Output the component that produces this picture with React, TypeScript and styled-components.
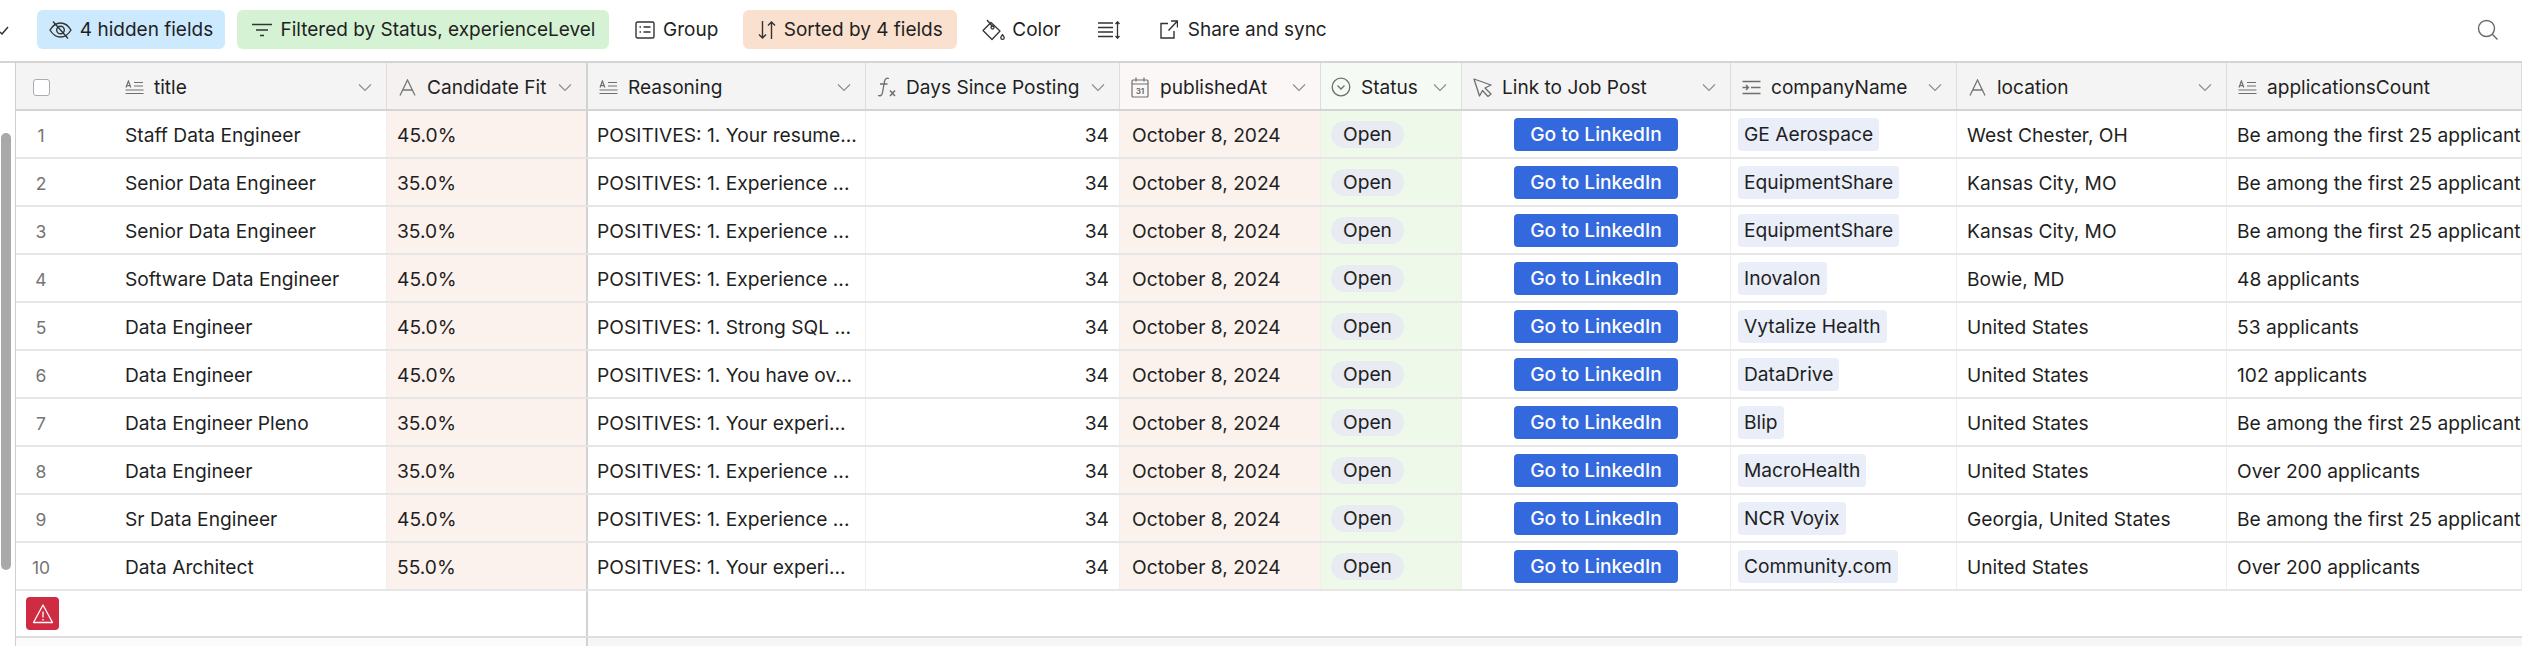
import React from 'react';
import styled, { createGlobalStyle } from 'styled-components';

const COLUMNS = '371px 201px 278px 254px 201px 141px 269px 226px 270px 295px';

type IconKind = 'longText' | 'text' | 'formula' | 'date' | 'select' | 'cursor' | 'indent';

interface Job {
  title: string;
  fit: string;
  reason: string;
  company: string;
  location: string;
  applicants: string;
}

const FIRST_25 = 'Be among the first 25 applicants';

const JOBS: Job[] = [
  { title: 'Staff Data Engineer', fit: '45.0%', reason: 'POSITIVES: 1. Your resume...', company: 'GE Aerospace', location: 'West Chester, OH', applicants: FIRST_25 },
  { title: 'Senior Data Engineer', fit: '35.0%', reason: 'POSITIVES: 1. Experience ...', company: 'EquipmentShare', location: 'Kansas City, MO', applicants: FIRST_25 },
  { title: 'Senior Data Engineer', fit: '35.0%', reason: 'POSITIVES: 1. Experience ...', company: 'EquipmentShare', location: 'Kansas City, MO', applicants: FIRST_25 },
  { title: 'Software Data Engineer', fit: '45.0%', reason: 'POSITIVES: 1. Experience ...', company: 'Inovalon', location: 'Bowie, MD', applicants: '48 applicants' },
  { title: 'Data Engineer', fit: '45.0%', reason: 'POSITIVES: 1. Strong SQL ...', company: 'Vytalize Health', location: 'United States', applicants: '53 applicants' },
  { title: 'Data Engineer', fit: '45.0%', reason: 'POSITIVES: 1. You have ov...', company: 'DataDrive', location: 'United States', applicants: '102 applicants' },
  { title: 'Data Engineer Pleno', fit: '35.0%', reason: 'POSITIVES: 1. Your experi...', company: 'Blip', location: 'United States', applicants: FIRST_25 },
  { title: 'Data Engineer', fit: '35.0%', reason: 'POSITIVES: 1. Experience ...', company: 'MacroHealth', location: 'United States', applicants: 'Over 200 applicants' },
  { title: 'Sr Data Engineer', fit: '45.0%', reason: 'POSITIVES: 1. Experience ...', company: 'NCR Voyix', location: 'Georgia, United States', applicants: FIRST_25 },
  { title: 'Data Architect', fit: '55.0%', reason: 'POSITIVES: 1. Your experi...', company: 'Community.com', location: 'United States', applicants: 'Over 200 applicants' },
];

function FieldIcon({ kind }: { kind: IconKind }) {
  switch (kind) {
    case 'longText':
      return (
        <svg width="19" height="15" viewBox="0 0 19 15" fill="none" stroke="#6e6e6e" strokeWidth="1.2">
          <path d="M1 7.500 3.400 1l2.400 6.500M1.800 5.600h3.200M9 2.500h9M9 6h9M.5 10h18M.5 13.500h18" />
        </svg>
      );
    case 'text':
      return (
        <svg width="17" height="17" viewBox="0 0 17 17" fill="none" stroke="#757575" strokeWidth="1.3">
          <path d="M1 16.500 8.500 1 16 16.500M4 11h9" />
        </svg>
      );
    case 'formula':
      return (
        <svg width="19" height="20" viewBox="0 0 19 20" fill="none" stroke="#6e6e6e" strokeWidth="1.3">
          <path d="M12 1.500c-2.500-1-4 .5-4.500 3L5.500 15.500c-.5 2.800-2 3.800-4.500 3M3 7h7.500" />
          <path d="m13 13.500 5 5.500M18 13.500 13 19" strokeWidth="1.500" />
        </svg>
      );
    case 'date':
      return (
        <svg width="18" height="21" viewBox="0 0 18 21" fill="none" stroke="#6e6e6e" strokeWidth="1.200">
          <rect x="1" y="3" width="16" height="17" rx="1" />
          <path d="M1 7h16M5 .5v4M13 .5v4" />
          <text x="9" y="17" textAnchor="middle" fontSize="8" fontWeight="700" fill="#6e6e6e" stroke="none" fontFamily="Inter, sans-serif">31</text>
        </svg>
      );
    case 'select':
      return (
        <svg width="20" height="20" viewBox="0 0 20 20" fill="none" stroke="#6e6e6e" strokeWidth="1.300">
          <circle cx="10" cy="10" r="8.800" />
          <path d="m6.500 8.500 3.500 3.500 3.500-3.500" />
        </svg>
      );
    case 'cursor':
      return (
        <svg width="19" height="19" viewBox="0 0 19 19" fill="none" stroke="#6e6e6e" strokeWidth="1.300" strokeLinejoin="round">
          <path d="M1 1 18 7l-6 3 6 6-3 2.500-5.500-6L6.500 18 1 1Z" />
        </svg>
      );
    case 'indent':
      return (
        <svg width="19" height="15" viewBox="0 0 19 15" fill="none" stroke="#6e6e6e" strokeWidth="1.400">
          <path d="M.5 1.500h18M9 7.500h9.500M.5 13.500h18M.5 7.500H6M4 5l2.500 2.500L4 10" />
        </svg>
      );
  }
}

function HeadLabel({ kind, text }: { kind: IconKind; text: string }) {
  return (
    <LabelRow>
      <IconSlot>
        <FieldIcon kind={kind} />
      </IconSlot>
      {text}
    </LabelRow>
  );
}

function Chevron() {
  return (
    <ChevronIcon width="14" height="9" viewBox="0 0 14 9" fill="none" stroke="#8c8c8c" strokeWidth="1.100">
      <path d="m1 1.500 6 6 6-6" />
    </ChevronIcon>
  );
}

export default function App() {
  return (
    <>
      <GlobalStyle />
      <Page>
        <Toolbar>
          <CutOffCaret width="10" height="10" viewBox="0 0 10 10" fill="none" stroke="#333" strokeWidth="1.500">
            <path d="m0 7 2 2 6-7" />
          </CutOffCaret>
          <Pill $bg="#cce9fe" $width={188}>
            <svg width="23" height="20" viewBox="0 0 23 20" fill="none" stroke="#333" strokeWidth="1.400">
              <path d="M1 10c3-5 6.500-7 10.500-7S19 5 22 10c-3 5-6.500 7-10.500 7S4 15 1 10Z" />
              <circle cx="11.500" cy="10" r="3.800" />
              <path d="M4 1.500l15 17" />
            </svg>
            4 hidden fields
          </Pill>
          <Pill $bg="#d5f3d4" $width={372}>
            <svg width="22" height="14" viewBox="0 0 22 14" fill="none" stroke="#333" strokeWidth="1.600">
              <path d="M1 1.500h20M5 7h12M9 12.500h4" />
            </svg>
            Filtered by Status, experienceLevel
          </Pill>
          <PlainAction $gap={8} $left={26}>
            <svg width="20" height="18" viewBox="0 0 20 18" fill="none" stroke="#333" strokeWidth="1.400">
              <rect x="1" y="1" width="18" height="16" rx="1.500" />
              <path d="M4.500 6H6M4.500 11H6M8.500 6h7M8.500 11h7" />
            </svg>
            Group
          </PlainAction>
          <Pill $bg="#fae0ce" $width={214} $left={13}>
            <svg width="18" height="20" viewBox="0 0 18 20" fill="none" stroke="#333" strokeWidth="1.400">
              <path d="M4.500 1v17M1 14.500 4.500 18 8 14.500M13.500 19V2M10 5.500 13.500 2 17 5.500" />
            </svg>
            Sorted by 4 fields
          </Pill>
          <PlainAction $gap={7} $left={25}>
            <svg width="23" height="22" viewBox="0 0 23 22" fill="none" stroke="#333" strokeWidth="1.300" strokeLinejoin="round">
              <path d="M9 3.500 18 12l-8 8.500-9-9 8-8Z" />
              <path d="M5 1l5.500 6.500" />
              <circle cx="10.500" cy="8.500" r="1.500" />
              <path d="M20.500 15.500c1 1.500 1.700 2.300 1.700 3.200a1.700 1.700 0 0 1-3.400 0c0-.9.700-1.700 1.700-3.200Z" />
            </svg>
            Color
          </PlainAction>
          <PlainAction $gap={0} $left={37}>
            <svg width="22" height="18" viewBox="0 0 22 18" fill="none" stroke="#333" strokeWidth="1.300">
              <path d="M0 2h15M0 6.500h15M0 11h15M0 15.500h15M19.500 1v16M17.500 3l2-2.200 2 2.200M17.500 15l2 2.200 2-2.200" />
            </svg>
          </PlainAction>
          <PlainAction $gap={10} $left={40}>
            <svg width="18" height="19" viewBox="0 0 18 19" fill="none" stroke="#333" strokeWidth="1.400">
              <path d="M8 3.500H1V18h13v-7M8.500 10.500 17 1.500M11 1h6.500v6.500" />
            </svg>
            Share and sync
          </PlainAction>
          <SearchButton>
            <svg width="21" height="21" viewBox="0 0 21 21" fill="none" stroke="#6a6a6a" strokeWidth="1.400">
              <circle cx="9.500" cy="9.500" r="8" />
              <path d="m15.300 15.300 5.200 5.200" />
            </svg>
          </SearchButton>
        </Toolbar>

        <Body>
          <ScrollGutter>
            <ScrollThumb />
          </ScrollGutter>
          <Table>
            <HeaderRow>
              <TitleHeadCell>
                <Checkbox />
                <HeadLabel kind="longText" text="title" />
                <Chevron />
              </TitleHeadCell>
              <HeadCell $bg="#f4f1f0" $frozen>
                <HeadLabel kind="text" text="Candidate Fit" />
                <Chevron />
              </HeadCell>
              <HeadCell>
                <HeadLabel kind="longText" text="Reasoning" />
                <Chevron />
              </HeadCell>
              <HeadCell>
                <HeadLabel kind="formula" text="Days Since Posting" />
                <Chevron />
              </HeadCell>
              <HeadCell $bg="#fbf7f6">
                <HeadLabel kind="date" text="publishedAt" />
                <Chevron />
              </HeadCell>
              <HeadCell $bg="#f5faf4">
                <HeadLabel kind="select" text="Status" />
                <Chevron />
              </HeadCell>
              <HeadCell>
                <HeadLabel kind="cursor" text="Link to Job Post" />
                <Chevron />
              </HeadCell>
              <HeadCell>
                <HeadLabel kind="indent" text="companyName" />
                <Chevron />
              </HeadCell>
              <HeadCell>
                <HeadLabel kind="text" text="location" />
                <Chevron />
              </HeadCell>
              <HeadCell>
                <HeadLabel kind="longText" text="applicationsCount" />
              </HeadCell>
            </HeaderRow>

            {JOBS.map((job, index) => (
              <DataRow key={index}>
                <TitleCell>
                  <RowNumber>{index + 1}</RowNumber>
                  {job.title}
                </TitleCell>
                <Cell $bg="#fbf2ed" $frozen>{job.fit}</Cell>
                <Cell $pad={9}>{job.reason}</Cell>
                <Cell $align="flex-end">34</Cell>
                <Cell $bg="#fbf2ed" $pad={12}>October 8, 2024</Cell>
                <WidgetCell $bg="#eef9e9">
                  <OpenTag>Open</OpenTag>
                </WidgetCell>
                <WidgetCell $align="center">
                  <LinkedInButton>Go to LinkedIn</LinkedInButton>
                </WidgetCell>
                <WidgetCell $pad={7}>
                  <CompanyChip>{job.company}</CompanyChip>
                </WidgetCell>
                <Cell>{job.location}</Cell>
                <Cell>{job.applicants}</Cell>
              </DataRow>
            ))}

            <FooterRow>
              <FooterLeft>
                <WarningButton>
                  <svg width="22" height="22" viewBox="0 0 22 22" fill="none" stroke="#fff" strokeWidth="1.300" strokeLinejoin="round">
                    <path d="M11 2 20.500 19.500h-19L11 2Z" />
                    <path d="M11 8.500v6M11 16v1.500" />
                  </svg>
                </WarningButton>
              </FooterLeft>
            </FooterRow>
            <BottomBand>
              <BottomLeft />
            </BottomBand>
          </Table>
        </Body>
      </Page>
    </>
  );
}

const GlobalStyle = createGlobalStyle`
  html, body {
    margin: 0;
    padding: 0;
    background: #fff;
  }

  body {
    font-family: Inter, 'Liberation Sans', sans-serif;
    font-size: 19px;
    color: #1f1f1f;
  }
`;

const Page = styled.div`
  width: 2522px;
  height: 646px;
  overflow: hidden;
  display: flex;
  flex-direction: column;
`;

const Toolbar = styled.div`
  height: 63px;
  box-sizing: border-box;
  padding-bottom: 2px;
  display: flex;
  align-items: center;
  border-bottom: 2px solid #d4d4d4;
  flex-shrink: 0;
`;

const CutOffCaret = styled.svg`
  flex-shrink: 0;
  margin-right: 27px;
`;

const Pill = styled.div<{ $bg: string; $width: number; $left?: number }>`
  width: ${(p) => p.$width}px;
  height: 39px;
  margin-left: ${(p) => p.$left ?? 0}px;
  margin-right: 12px;
  flex-shrink: 0;
  box-sizing: border-box;
  display: flex;
  align-items: center;
  justify-content: center;
  gap: 8px;
  border-radius: 6px;
  background: ${(p) => p.$bg};
  white-space: nowrap;
`;

const PlainAction = styled.div<{ $gap: number; $left: number }>`
  display: flex;
  align-items: center;
  gap: ${(p) => p.$gap}px;
  margin-left: ${(p) => p.$left - 12}px;
  margin-right: 12px;
  white-space: nowrap;
`;

const SearchButton = styled.div`
  margin-left: auto;
  margin-right: 24px;
  display: flex;
`;

const Body = styled.div`
  flex: 1;
  display: flex;
  min-height: 0;
`;

const ScrollGutter = styled.div`
  width: 15px;
  flex-shrink: 0;
  padding: 70px 0 0 1px;
  box-sizing: border-box;
`;

const ScrollThumb = styled.div`
  width: 10px;
  height: 437px;
  border-radius: 5px;
  background: #a9a9a9;
`;

const Table = styled.div`
  flex: 1;
  min-width: 0;
  border-left: 1px solid #cfcfcf;
  display: flex;
  flex-direction: column;
`;

const RowGrid = styled.div`
  display: grid;
  grid-template-columns: ${COLUMNS};
  width: max-content;
`;

const HeaderRow = styled(RowGrid)`
  height: 48px;
  box-sizing: border-box;
  border-bottom: 2px solid #d4d4d4;
  font-size: 19.1px;
`;

const DataRow = styled(RowGrid)`
  height: 48px;
  box-sizing: border-box;
  border-bottom: 2px solid #e6e6e6;
  font-size: 19.2px;
`;

const HeadCell = styled.div<{ $bg?: string; $frozen?: boolean }>`
  display: flex;
  align-items: center;
  justify-content: space-between;
  padding: 2px 14px 0 9px;
  background: ${(p) => p.$bg ?? '#f4f4f4'};
  border-right: ${(p) => (p.$frozen ? '2px solid #d2d2d2' : '1px solid #dddddd')};
  min-width: 0;
  box-sizing: border-box;
  white-space: nowrap;
`;

const TitleHeadCell = styled(HeadCell)`
  padding-left: 17px;
`;

const LabelRow = styled.div`
  display: flex;
  align-items: center;
  margin-right: auto;
`;

const IconSlot = styled.span`
  width: 22px;
  margin-right: 9px;
  display: flex;
  align-items: center;
  justify-content: center;
  flex-shrink: 0;
`;

const ChevronIcon = styled.svg`
  flex-shrink: 0;
`;

const Checkbox = styled.div`
  width: 17px;
  height: 17px;
  box-sizing: border-box;
  border: 1.5px solid #a6adb8;
  border-radius: 3px;
  background: #fff;
  flex-shrink: 0;
  margin-right: 73px;
`;

const Cell = styled.div<{ $bg?: string; $align?: string; $pad?: number; $frozen?: boolean }>`
  display: flex;
  align-items: center;
  justify-content: ${(p) => p.$align ?? 'flex-start'};
  padding: 2px ${(p) => p.$pad ?? 10}px 0;
  background: ${(p) => p.$bg ?? '#fff'};
  border-right: ${(p) => (p.$frozen ? '2px solid #d2d2d2' : '1px solid #efefef')};
  box-sizing: border-box;
  min-width: 0;
  white-space: nowrap;
  overflow: hidden;
`;

const WidgetCell = styled(Cell)`
  padding-top: 0;
`;

const TitleCell = styled(Cell)`
  padding-left: 0;
  padding-right: 0;
`;

const RowNumber = styled.div`
  width: 109px;
  padding-right: 59px;
  box-sizing: border-box;
  text-align: center;
  font-size: 17.5px;
  color: #757575;
  flex-shrink: 0;
`;

const OpenTag = styled.span`
  height: 27px;
  padding: 0 12px;
  display: flex;
  align-items: center;
  border-radius: 14px;
  background: #e8ebf2;
`;

const LinkedInButton = styled.div`
  width: 164px;
  height: 33px;
  display: flex;
  align-items: center;
  justify-content: center;
  border-radius: 4px;
  background: #3369dc;
  color: #fff;
  font-weight: 500;
`;

const CompanyChip = styled.span`
  height: 33px;
  padding: 0 6px;
  display: flex;
  align-items: center;
  border-radius: 4px;
  background: #e9eef8;
`;

const FooterRow = styled.div`
  height: 47px;
  box-sizing: border-box;
  border-bottom: 2px solid #dedede;
  display: flex;
`;

const FooterLeft = styled.div`
  width: 572px;
  box-sizing: border-box;
  border-right: 2px solid #d2d2d2;
  padding: 6px 0 0 10px;
`;

const WarningButton = styled.div`
  width: 33px;
  height: 33px;
  display: flex;
  align-items: center;
  justify-content: center;
  border-radius: 4px;
  background: #cf2b43;
`;

const BottomBand = styled.div`
  flex: 1;
  display: flex;
  background: #f6f6f6;
`;

const BottomLeft = styled.div`
  width: 572px;
  box-sizing: border-box;
  background: #fbfbfb;
  border-right: 2px solid #d2d2d2;
`;
